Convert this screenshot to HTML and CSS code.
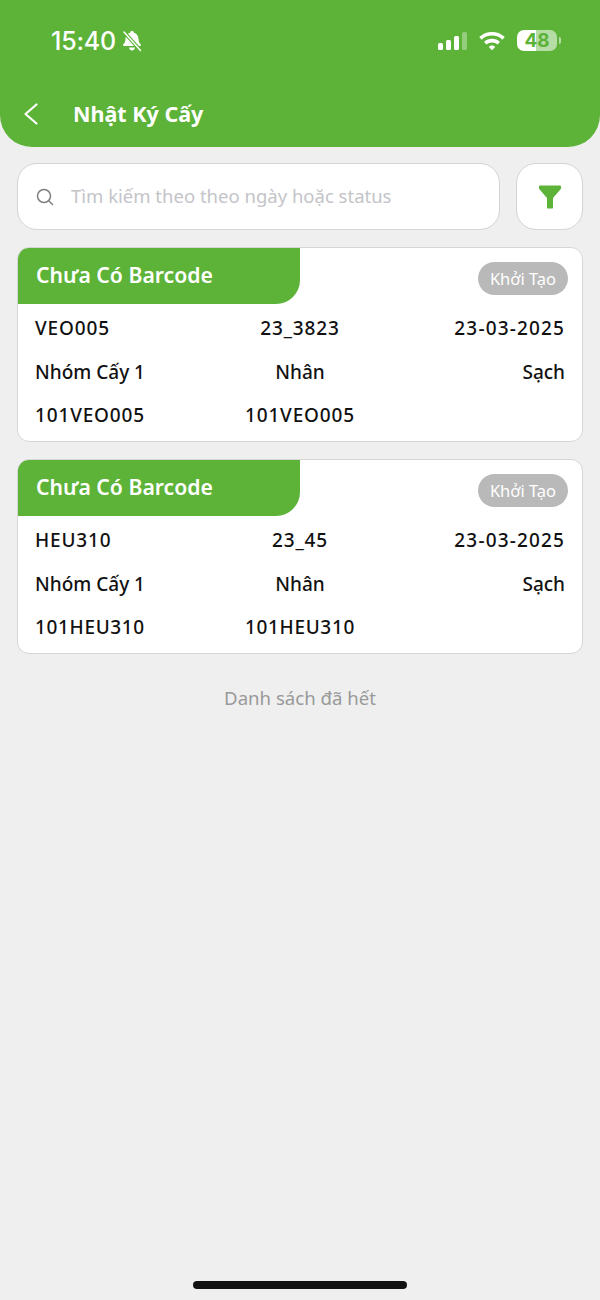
FILE: index.html
```html
<!DOCTYPE html>
<html lang="vi">
<head>
<meta charset="utf-8">
<title>Nhật Ký Cấy</title>
<link rel="stylesheet" href="styles.css">
</head>
<body>
<div class="page">
  <header class="header">
    <div class="status">
      <div class="status-left">
        <span class="time">15:40</span>
        <svg class="bell" width="20" height="22" viewBox="0 0 20 22"><path d="M10 1c1.100 0 1.800.7 1.900 1.700 2.900.8 4.400 3.100 4.600 6 .1 2.400.5 4 2.200 5.600.6.700.2 1.700-.7 1.700H2c-.9 0-1.300-1-.7-1.700C3 12.700 3.400 11.100 3.500 8.700c.2-2.900 1.700-5.200 4.600-6C8.200 1.700 8.900 1 10 1zM7 17.500h6c-.2 1.800-1.400 3-3 3s-2.800-1.200-3-3z" fill="#fff"/><path d="M2 2l16.500 18.500" stroke="#5cb338" stroke-width="3.600"/><path d="M2 2l16.500 18.500" stroke="#fff" stroke-width="1.500" stroke-linecap="round"/></svg>
      </div>
      <div class="status-right">
        <svg class="signal" width="32" height="20" viewBox="0 0 32 20"><rect x="1" y="12" width="5" height="7" rx="1.500" fill="#fff"/><rect x="9" y="9" width="5" height="10" rx="1.500" fill="#fff"/><rect x="17" y="5" width="5" height="14" rx="1.500" fill="#fff"/><rect x="25" y="1" width="5" height="18" rx="1.500" fill="#fff" opacity=".35"/></svg>
        <svg width="28" height="20" viewBox="0 0 28 20"><path d="M14 1c5 0 9.500 1.900 12.800 5.100l-2.500 2.600C21.700 6.100 18 4.600 14 4.600S6.300 6.100 3.700 8.700L1.200 6.100C4.500 2.900 9 1 14 1zm0 6.800c3.100 0 5.900 1.200 8 3.200l-2.500 2.500c-1.500-1.300-3.400-2.100-5.500-2.100s-4 .8-5.500 2.100L6 11c2.100-2 4.900-3.200 8-3.200zm0 6.800c1.300 0 2.400.5 3.200 1.300L14 19.200l-3.200-3.300c.8-.8 1.900-1.300 3.200-1.300z" fill="#fff"/></svg>
        <div class="battery">
          <div class="battery-body"><span class="battery-level">48</span></div>
          <span class="battery-cap"></span>
        </div>
      </div>
    </div>
    <div class="titlebar">
      <svg class="back" width="16" height="24" viewBox="0 0 16 24"><path d="M13.500 2.500L2.500 12l11 9.500" fill="none" stroke="#fff" stroke-width="2.200" stroke-linecap="round" stroke-linejoin="round"/></svg>
      <h1 class="title">Nhật Ký Cấy</h1>
    </div>
  </header>

  <main class="content">
    <div class="toolbar">
      <div class="search">
        <svg width="18" height="18" viewBox="0 0 18 18"><circle cx="8" cy="8" r="6.500" fill="none" stroke="#808080" stroke-width="1.500"/><path d="M13 13l3.500 3.500" stroke="#808080" stroke-width="1.500" stroke-linecap="round"/></svg>
        <span class="placeholder">Tìm kiếm theo theo ngày hoặc status</span>
      </div>
      <div class="filter">
        <svg width="24" height="24" viewBox="0 0 24 24"><path d="M1 1.500C1 .9 1.400.6 2 .6h20c.6 0 1 .3 1 .9v2.200L15 13v9.400c0 .8-.5 1.200-1.200 1.200h-3.600c-.7 0-1.200-.4-1.200-1.200V13L1 3.700z" fill="#5cb338"/></svg>
      </div>
    </div>

    <article class="card">
      <div class="card-head">
        <div class="tag">Chưa Có Barcode</div>
        <span class="pill">Khởi Tạo</span>
      </div>
      <div class="card-body">
        <span class="num">VEO005</span><span class="c num">23_3823</span><span class="r date">23-03-2025</span>
        <span>Nhóm Cấy 1</span><span class="c">Nhân</span><span class="r">Sạch</span>
        <span class="num">101VEO005</span><span class="c num">101VEO005</span><span></span>
      </div>
    </article>

    <article class="card">
      <div class="card-head">
        <div class="tag">Chưa Có Barcode</div>
        <span class="pill">Khởi Tạo</span>
      </div>
      <div class="card-body">
        <span class="num">HEU310</span><span class="c num">23_45</span><span class="r date">23-03-2025</span>
        <span>Nhóm Cấy 1</span><span class="c">Nhân</span><span class="r">Sạch</span>
        <span class="num-tight">101HEU310</span><span class="c num-tight">101HEU310</span><span></span>
      </div>
    </article>

    <p class="end">Danh sách đã hết</p>
  </main>

  <div class="home"></div>
</div>
</body>
</html>
```
FILE: styles.css
```css
* { box-sizing: border-box; }
html, body { margin: 0; padding: 0; }
body {
  background: #efefef;
  font-family: "Noto Sans", "Open Sans", sans-serif;
  color: #111;
}
.page {
  width: 600px;
  height: 1300px;
  display: flex;
  flex-direction: column;
  overflow: hidden;
}
.header {
  height: 146.500px;
  background: #5cb338;
  border-radius: 0 0 32px 32px;
  color: #fff;
  flex: none;
}
.status {
  height: 83px;
  padding: 0 39px 2px 51px;
  display: flex;
  justify-content: space-between;
  align-items: center;
}
.status-left { display: flex; align-items: center; gap: 6px; }
.time {
  font-family: Inter, "Liberation Sans", sans-serif;
  font-size: 25px;
  font-weight: 500;
  letter-spacing: -.2px;
}
.status-right { display: flex; align-items: center; gap: 11px; }
.signal { margin-right: -2px; }
.battery { display: flex; align-items: center; gap: 2px; }
.battery-body {
  width: 40px;
  height: 21px;
  border-radius: 7px;
  background: linear-gradient(90deg, #fff 0 48%, rgba(255,255,255,.55) 48% 100%);
  display: flex;
  align-items: center;
  justify-content: center;
}
.battery-level {
  font-family: Inter, "Liberation Sans", sans-serif;
  font-size: 19px;
  font-weight: 700;
  color: #5cb338;
}
.battery-cap {
  width: 2px;
  height: 7px;
  border-radius: 0 2px 2px 0;
  background: rgba(255,255,255,.55);
}
.titlebar {
  height: 62px;
  padding-left: 23px;
  display: flex;
  align-items: center;
  gap: 34px;
}
.back { flex: none; }
.title {
  margin: 0;
  font-size: 21.500px;
  font-weight: 700;
  line-height: 1.2;
}
.content {
  padding: 16.500px 17px 0;
  display: flex;
  flex-direction: column;
  gap: 17px;
}
.toolbar { display: flex; gap: 16px; }
.search, .filter {
  height: 67px;
  background: #fff;
  border: 1px solid #d4d4d4;
  border-radius: 20px;
  display: flex;
  align-items: center;
}
.search { flex: 1; padding: 0 0 2px 18px; gap: 17px; }
.search svg { margin-top: 2px; }
.filter { width: 67px; justify-content: center; flex: none; }
.placeholder { font-size: 18.500px; color: #c4c4c8; white-space: nowrap; }
.card {
  height: 195px;
  background: #fff;
  border: 1px solid #d6d6d6;
  border-radius: 12px;
  overflow: hidden;
}
.card-head {
  height: 56px;
  display: flex;
  justify-content: space-between;
  align-items: flex-start;
  padding-right: 14px;
}
.tag {
  width: 282px;
  height: 56px;
  padding: 0 0 4px 18px;
  background: #5cb338;
  border-radius: 0 0 24px 0;
  color: #fff;
  font-size: 21.200px;
  font-weight: 600;
  display: flex;
  align-items: center;
}
.pill {
  margin-top: 14px;
  width: 90px;
  height: 33px;
  border-radius: 17px;
  background: #b9b9b9;
  color: #fff;
  font-size: 16.500px;
  display: flex;
  align-items: center;
  justify-content: center;
}
.card-body {
  padding: 2.500px 17px 0;
  display: grid;
  grid-template-columns: 1fr 1fr 1fr;
  grid-auto-rows: 43.500px;
  align-items: center;
  font-size: 19px;
  font-weight: 500;
}
.num { letter-spacing: .85px; }
.num-tight { letter-spacing: .65px; }
.date { letter-spacing: 1.150px; }
.c { text-align: center; white-space: nowrap; }
.r { text-align: right; white-space: nowrap; }
.end {
  margin: 14px 0 0;
  text-align: center;
  font-size: 18.600px;
  color: #999;
}
.home {
  margin: auto auto 11px;
  width: 214px;
  height: 8px;
  border-radius: 4px;
  background: #111;
  flex: none;
}
```
